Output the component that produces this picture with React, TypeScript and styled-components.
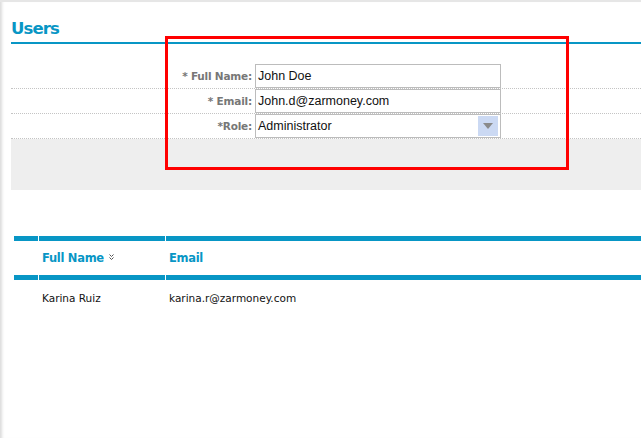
import React from "react";
import styled, { createGlobalStyle } from "styled-components";

const Global = createGlobalStyle`
  html, body { margin: 0; padding: 0; background: #fff; }
  body { font-family: "DejaVu Sans", Verdana, sans-serif; }
  * { box-sizing: border-box; }
`;

const BLUE = "#0896c5";

const Frame = styled.div`
  position: relative;
  width: 641px;
  height: 438px;
  overflow: hidden;
  border-top: 2px solid #e6e6e6;
  box-shadow: inset 4px 0 3px -2px rgba(0, 0, 0, 0.14);
  padding-left: 11px;
`;

const Heading = styled.h1`
  margin: 0;
  padding-top: 17px;
  height: 42px;
  font-family: "DejaVu Sans", Verdana, sans-serif;
  font-weight: bold;
  font-size: 16.5px;
  letter-spacing: -0.9px;
  line-height: 20px;
  color: ${BLUE};
  border-bottom: 2px solid ${BLUE};
`;

const Form = styled.div`
  padding-top: 20px;
`;

const FormRow = styled.div`
  display: grid;
  grid-template-columns: 241px 246px;
  column-gap: 3px;
  align-items: center;
  border-bottom: 1px dotted #c4c4c4;
`;

const Label = styled.label`
  text-align: right;
  font-family: "DejaVu Sans", Verdana, sans-serif;
  font-weight: bold;
  font-size: 10.5px;
  letter-spacing: -0.2px;
  color: #777;
`;

const Field = styled.div`
  height: 24px;
  border: 1px solid #bcbcbc;
  display: flex;
  align-items: center;
  padding: 0 2px 0 2px;
  font-family: "Liberation Sans", Arial, sans-serif;
  font-size: 12.5px;
  color: #111;
  background: #fff;
`;

const SelectText = styled.span`
  flex: 1;
`;

const ArrowBox = styled.span`
  width: 20px;
  height: 20px;
  background: #cbd9f3;
  display: flex;
  align-items: center;
  justify-content: center;
`;

const GrayBand = styled.div`
  height: 51px;
  background: #eeeeee;
`;

const Table = styled.table`
  margin-top: 46px;
  margin-left: 2px;
  width: 630px;
  border-collapse: separate;
  border-spacing: 1px 0;
  table-layout: fixed;
`;

const Th = styled.th<{ $w?: number }>`
  width: ${(p) => (p.$w ? `${p.$w}px` : "auto")};
  height: 44px;
  border-top: 5px solid ${BLUE};
  border-bottom: 5px solid ${BLUE};
  text-align: left;
  padding: 0 0 0 3px;
  font-family: "DejaVu Sans", Verdana, sans-serif;
  font-weight: bold;
  font-size: 11.5px;
  letter-spacing: -0.3px;
  color: ${BLUE};
  vertical-align: middle;
`;

const SortIcon = styled.svg`
  margin-left: 5px;
  vertical-align: 1px;
`;

const Td = styled.td`
  padding: 12px 0 0 3px;
  font-family: "DejaVu Sans", Verdana, sans-serif;
  font-size: 10.5px;
  color: #111;
`;

const Annotation = styled.div`
  position: absolute;
  left: 165px;
  top: 34px;
  width: 404px;
  height: 134px;
  border: 3px solid #ff0000;
  pointer-events: none;
`;

export default function App() {
  return (
    <>
      <Global />
      <Frame>
        <Heading>Users</Heading>
        <Form>
          <FormRow>
            <Label>* Full Name:</Label>
            <Field>John Doe</Field>
          </FormRow>
          <FormRow>
            <Label>* Email:</Label>
            <Field>John.d@zarmoney.com</Field>
          </FormRow>
          <FormRow>
            <Label>*Role:</Label>
            <Field>
              <SelectText>Administrator</SelectText>
              <ArrowBox>
                <svg width="10" height="6" viewBox="0 0 10 6">
                  <polygon points="0,0 10,0 5,6" fill="#8a8a8a" />
                </svg>
              </ArrowBox>
            </Field>
          </FormRow>
        </Form>
        <GrayBand />
        <Table>
          <thead>
            <tr>
              <Th $w={24} />
              <Th $w={126}>
                Full Name
                <SortIcon width="5" height="7" viewBox="0 0 5 7">
                  <polyline points="0.5,0.5 2.5,2.5 4.5,0.5" fill="none" stroke="#555" strokeWidth="1" />
                  <polyline points="0.5,3.5 2.5,5.5 4.5,3.5" fill="none" stroke="#555" strokeWidth="1" />
                </SortIcon>
              </Th>
              <Th>Email</Th>
            </tr>
          </thead>
          <tbody>
            <tr>
              <Td />
              <Td>Karina Ruiz</Td>
              <Td>karina.r@zarmoney.com</Td>
            </tr>
          </tbody>
        </Table>
        <Annotation />
      </Frame>
    </>
  );
}
